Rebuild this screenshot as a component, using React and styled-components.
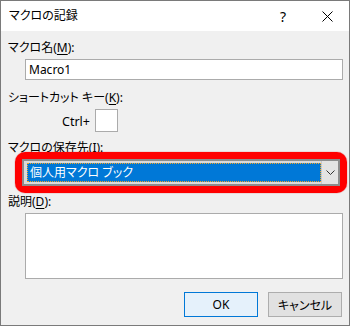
import React from "react";
import styled, { createGlobalStyle } from "styled-components";

const Global = createGlobalStyle`
  html, body { margin: 0; padding: 0; background: #ffffff; }
  body {
    font-family: "Noto Sans", "Noto Sans CJK JP", sans-serif;
    font-size: 12px;
    color: #000;
  }
  * { box-sizing: border-box; }
`;

const Dialog = styled.div`
  width: 350px;
  height: 326px;
  border: 1px solid #7a7a7a;
  background: #f0f0f0;
  display: flex;
  flex-direction: column;
`;

const TitleBar = styled.div`
  height: 30px;
  background: #ffffff;
  display: flex;
  align-items: center;
  padding-left: 8px;
`;

const Title = styled.div`
  flex: 1;
  font-size: 12px;
  font-feature-settings: "palt";
  line-height: 16px;
  margin-top: -1px;
`;

const TitleButton = styled.div`
  width: ${(p) => p.$w}px;
  height: 30px;
  display: flex;
  align-items: center;
  justify-content: center;
  font-size: 14px;
  color: #000;
`;

const Body = styled.div`
  flex: 1;
  display: flex;
  flex-direction: column;
  padding: 9px 6px 8px 6px;
`;

const Label = styled.div`
  font-size: 12px;
  line-height: 16px;
  height: 16px;
  font-feature-settings: "palt";
  margin-top: ${(p) => p.$mt || 0}px;
  padding-left: 1px;
  white-space: nowrap;
  u {
    text-decoration: underline;
    text-underline-offset: 2px;
  }
`;

const TextInput = styled.div`
  margin: ${(p) => p.$mt || 0}px 0 0 18px;
  height: ${(p) => p.$h}px;
  background: #ffffff;
  border: 1px solid #ababab;
  padding: 2px 3px;
  font-size: 12px;
  line-height: 16px;
`;

const CtrlRow = styled.div`
  display: flex;
  align-items: center;
  gap: 5px;
  margin: 3px 0 0 55px;
`;

const CtrlText = styled.span`
  font-size: 12.5px;
  line-height: 16px;
  margin-top: 3px;
`;

const KeyBox = styled.div`
  width: 23px;
  height: 23px;
  background: #ffffff;
  border: 1px solid #ababab;
`;

const Highlight = styled.div`
  margin: -4px -4px 0 8px;
  border: 7px solid #ff0000;
  border-radius: 10px;
  box-shadow: 0 0 1px #c00000;
`;

const Combo = styled.div`
  height: 27px;
  display: flex;
  border: 2px solid #8c8c8c;
  background: #dadada;
  padding: 2px 0 2px 3px;
`;

const ComboValue = styled.div`
  flex: 1;
  background: #0078d7;
  color: #ffffff;
  outline: 1px dotted #f6a623;
  outline-offset: -1px;
  font-size: 12px;
  line-height: 19px;
  padding-left: 3px;
  font-feature-settings: "palt";
`;

const DropButton = styled.div`
  width: 17px;
  display: flex;
  align-items: center;
  justify-content: center;
  background: #e3e3e3;
  margin: -2px 0;
  border-left: 1px solid #c8c8c8;
`;

const Buttons = styled.div`
  display: flex;
  justify-content: flex-end;
  gap: 10px;
  margin-top: 13px;
  padding-right: 1px;
`;

const Button = styled.div`
  width: 74px;
  height: 25px;
  display: flex;
  align-items: center;
  justify-content: center;
  font-size: 12px;
  font-feature-settings: "palt";
  border: 1px solid ${(p) => (p.$primary ? "#0078d7" : "#adadad")};
  background: ${(p) => (p.$primary ? "#e5f1fb" : "#e1e1e1")};
`;

export default function App() {
  return (
    <>
      <Global />
      <Dialog>
        <TitleBar>
          <Title>マクロの記録</Title>
          <TitleButton $w={46}>?</TitleButton>
          <TitleButton $w={43}>
            <svg width="11" height="11" viewBox="0 0 11 11">
              <path d="M0.5 0.5 L10.5 10.5 M10.5 0.5 L0.5 10.5" stroke="#000" strokeWidth="1" fill="none" />
            </svg>
          </TitleButton>
        </TitleBar>
        <Body>
          <Label>
            マクロ名(<u>M</u>):
          </Label>
          <TextInput $mt={3} $h={21}>Macro1</TextInput>
          <Label $mt={10}>
            ショートカット キー(<u>K</u>):
          </Label>
          <CtrlRow>
            <CtrlText>Ctrl+</CtrlText>
            <KeyBox />
          </CtrlRow>
          <Label $mt={8}>
            マクロの保存先(<u>I</u>):
          </Label>
          <Highlight>
            <Combo>
              <ComboValue>個人用マクロ ブック</ComboValue>
              <DropButton>
                <svg width="9" height="5" viewBox="0 0 9 5">
                  <path d="M0.5 0.5 L4.5 4.5 L8.5 0.5" stroke="#333" strokeWidth="1" fill="none" />
                </svg>
              </DropButton>
            </Combo>
          </Highlight>
          <Label $mt={1}>
            説明(<u>D</u>):
          </Label>
          <TextInput $mt={3} $h={66} />
          <Buttons>
            <Button $primary>OK</Button>
            <Button>キャンセル</Button>
          </Buttons>
        </Body>
      </Dialog>
    </>
  );
}
